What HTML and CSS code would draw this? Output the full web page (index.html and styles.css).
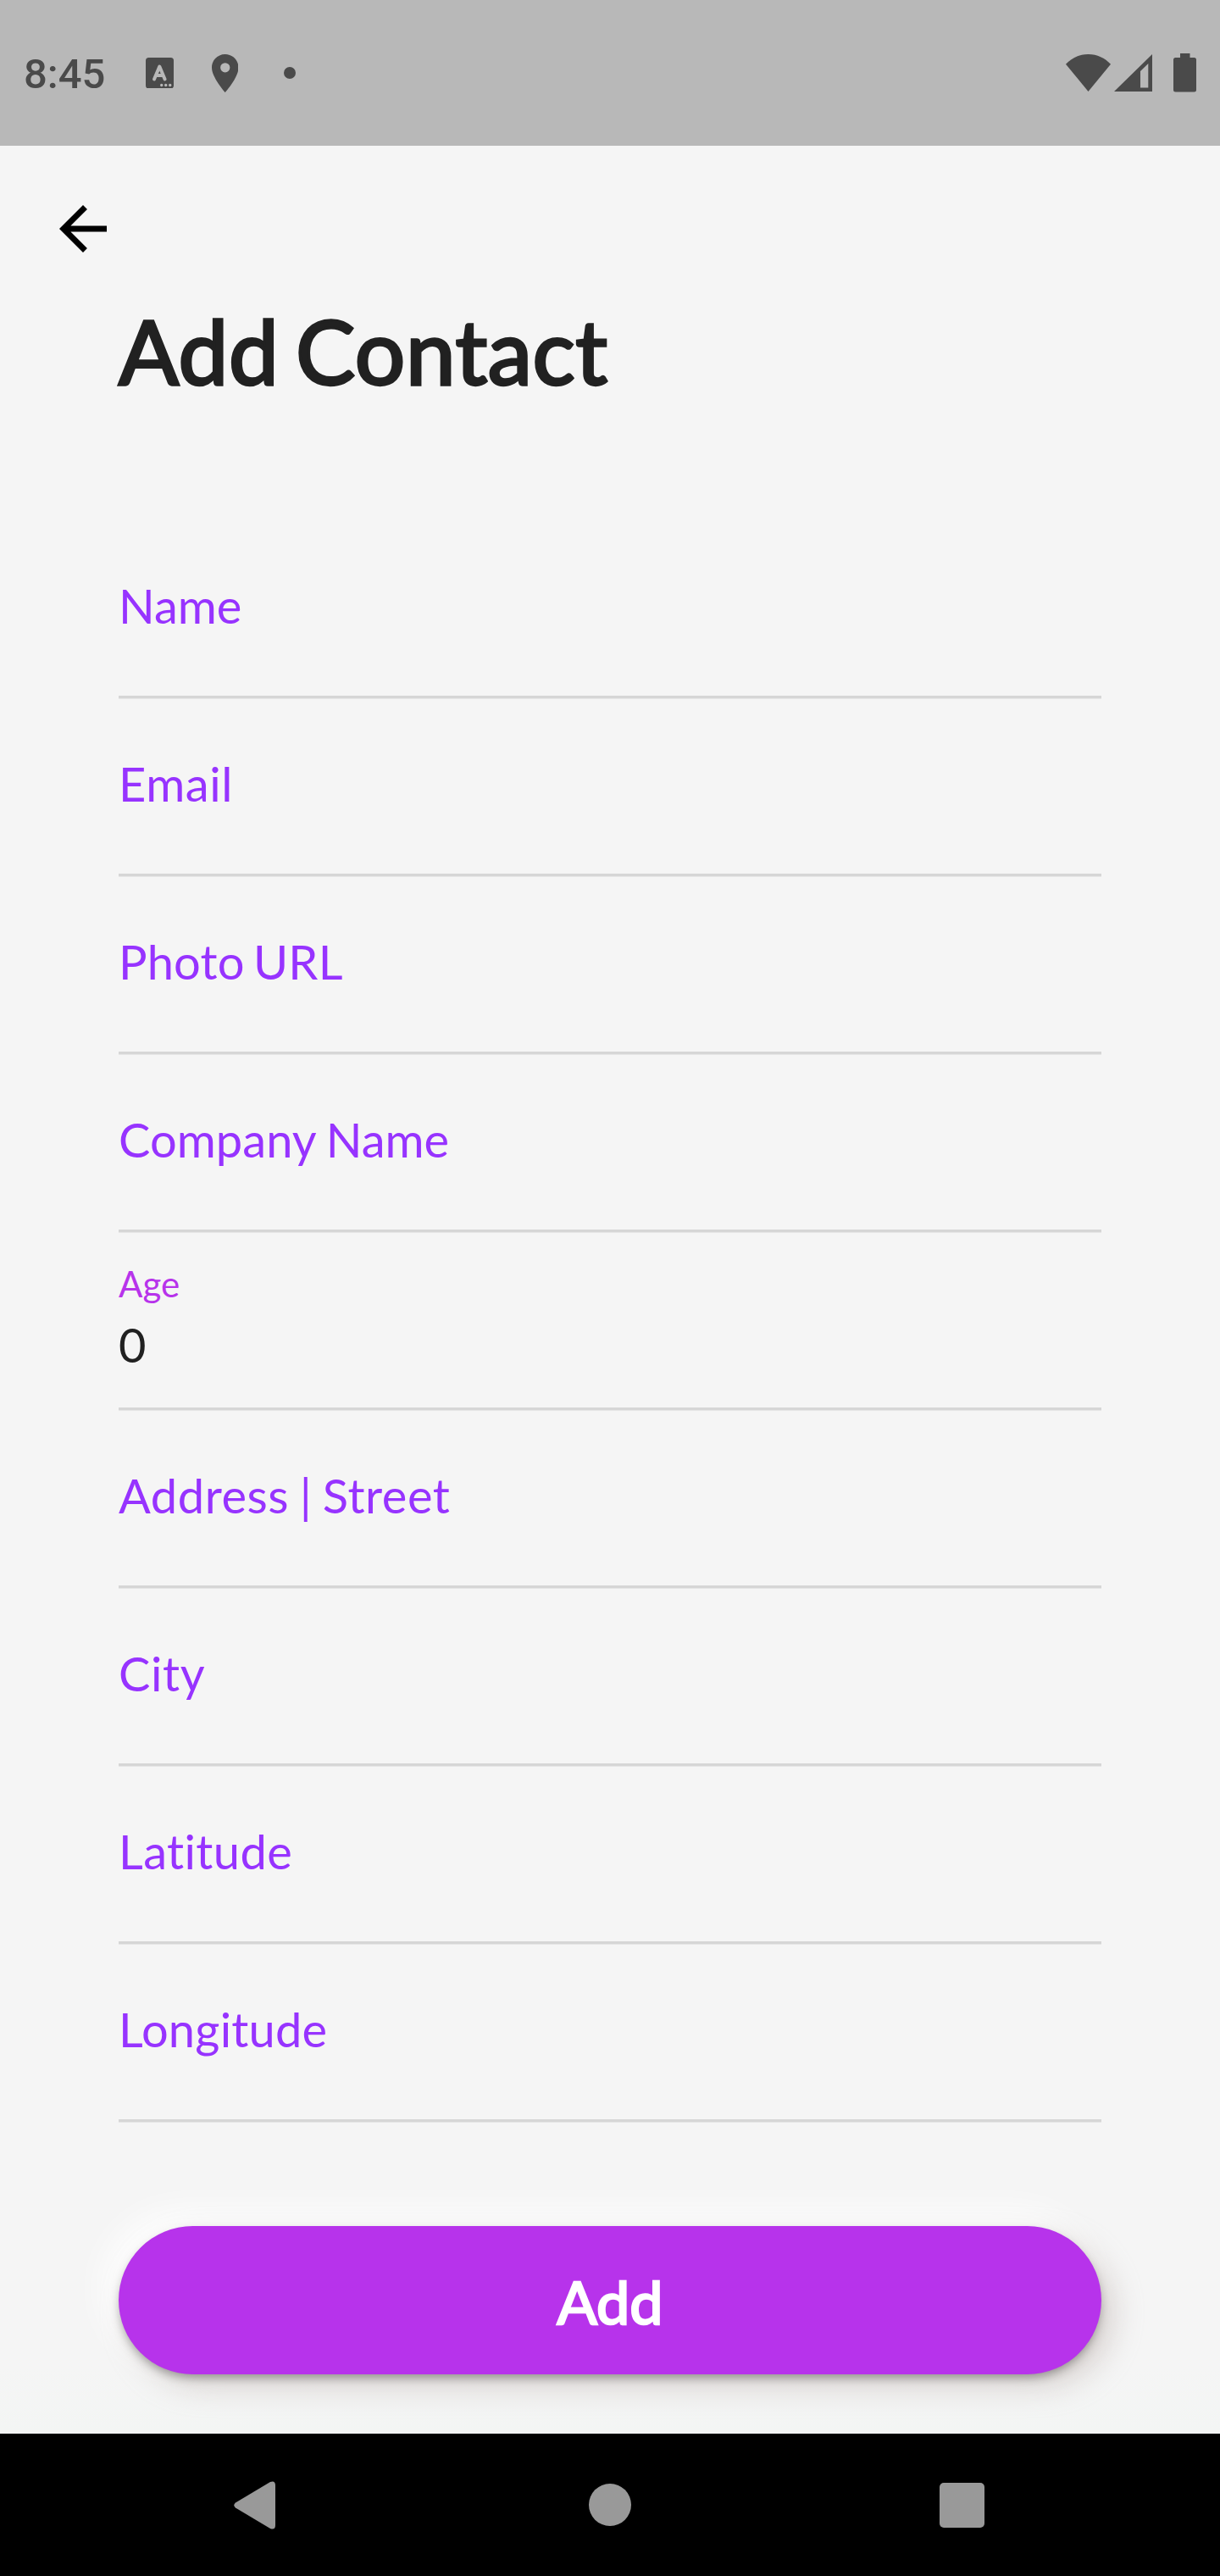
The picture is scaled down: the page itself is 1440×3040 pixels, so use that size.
FILE: index.html
```html
<!DOCTYPE html>
<html lang="en">
<head>
<meta charset="utf-8">
<title>Add Contact</title>
<link rel="stylesheet" href="styles.css">
</head>
<body>
<div class="screen">
  <header class="status-bar">
    <div class="status-left">
      <span class="clock">8:45</span>
      <svg class="icon-input" viewBox="0 0 33 36.5"><rect width="33" height="36.5" rx="3.5" fill="#4a4a4a"/><path d="M10 25.5L16.3 10.5L22.6 25.5M12.5 21H20" fill="none" stroke="#b8b8b8" stroke-width="4" stroke-linecap="round" stroke-linejoin="round"/><g fill="#b8b8b8"><circle cx="18.7" cy="32.5" r="1.7"/><circle cx="23.7" cy="32.5" r="1.7"/><circle cx="28.7" cy="32.5" r="1.7"/></g></svg>
      <svg class="icon-pin" viewBox="5 2 14 20"><path fill="#4a4a4a" d="M12 2C8.13 2 5 5.13 5 9c0 5.25 7 13 7 13s7-7.75 7-13c0-3.87-3.13-7-7-7zm0 9.5a2.5 2.5 0 0 1 0-5 2.5 2.5 0 0 1 0 5z"/></svg>
      <span class="dot"></span>
    </div>
    <div class="status-right">
      <svg class="icon-wifi" viewBox="0 0 53 44"><path fill="#4a4a4a" d="M26.5 44L0 11.700C7 4.500 16 0 26.500 0S46 4.500 53 11.700z"/></svg>
      <svg class="icon-signal" viewBox="0 0 45 44"><path fill="#4a4a4a" fill-rule="evenodd" d="M45 0V44H0zM40.300 11L31 20V39.500H40.300z"/></svg>
      <svg class="icon-battery" viewBox="0 0 27 46"><path fill="#4a4a4a" d="M8 0H19.500V5H24.500Q27 5 27 7.500V43Q27 45.500 24.500 45.500H2.500Q0 45.500 0 43V7.500Q0 5 2.500 5H8z"/></svg>
    </div>
  </header>
  <main class="page">
    <svg class="back" viewBox="0 0 24 24"><path d="M20 11H7.830l5.590-5.590L12 4l-8 8 8 8 1.410-1.410L7.830 13H20v-2z"/></svg>
    <h1 class="title">Add Contact</h1>
    <form class="form">
      <div class="field"><label class="label">Name</label></div>
      <div class="field email"><label class="label">Email</label></div>
      <div class="field photo"><label class="label">Photo URL</label></div>
      <div class="field company"><label class="label">Company Name</label></div>
      <div class="field filled"><label class="label">Age</label><span class="value">0</span></div>
      <div class="field street"><label class="label">Address | Street</label></div>
      <div class="field city"><label class="label">City</label></div>
      <div class="field latitude"><label class="label">Latitude</label></div>
      <div class="field longitude"><label class="label">Longitude</label></div>
      <button class="submit" type="button">Add</button>
    </form>
  </main>
  <nav class="nav-bar">
    <svg class="nav-back" viewBox="0 0 49 57"><path fill="#999" d="M2 25.500L43 1Q49 -1 49 5V52Q49 58 43 56L2 31.500Q-1.500 28.500 2 25.500z"/></svg>
    <span class="nav-home"></span>
    <span class="nav-recent"></span>
  </nav>
</div>
</body>
</html>
```
FILE: styles.css
```css
* { box-sizing: border-box; }
body { margin: 0; background: #f5f5f5; font-family: Lato, sans-serif; font-variant-ligatures: none; }
.screen { width: 1440px; height: 3040px; display: flex; flex-direction: column; overflow: hidden; }

.status-bar { height: 172px; background: #b8b8b8; display: flex; justify-content: space-between; align-items: center; padding: 0 28px; color: #4a4a4a; }
.status-left, .status-right { display: flex; align-items: center; }
.clock { width: 144px; font: 500 49px/58px Roboto, sans-serif; padding-top: 4px; }
.icon-input { width: 33px; height: 36.5px; }
.icon-pin { width: 31.5px; height: 45px; margin-left: 44.5px; }
.dot { width: 14px; height: 14px; border-radius: 50%; background: #4a4a4a; margin-left: 53.5px; }
.icon-wifi { width: 53px; height: 44px; }
.icon-signal { width: 45px; height: 44px; margin-left: 4px; }
.icon-battery { width: 27px; height: 46px; margin-left: 25px; }

.page { flex: 1; padding: 56px 140px 0; background: linear-gradient(#f5f5f5 97%, #f3f5f4); }
.back { display: block; width: 84px; height: 84px; margin-left: -84px; }
.title { margin: 38px 0 0; font-size: 105px; line-height: 126px; font-weight: 400; letter-spacing: .6px; word-spacing: -7.7px; color: #212121; -webkit-text-stroke: 3.3px #212121; white-space: nowrap; }
.form { margin-top: 138px; display: flex; flex-direction: column; }
.field { height: 210px; border-bottom: 3px solid #d6d6d6; box-shadow: 0 1px #e6e6e6; display: flex; flex-direction: column; padding-top: 67px; }
.label { font-size: 56px; line-height: 68px; color: #9733ff; }
.email { letter-spacing: .6px; }
.photo { letter-spacing: .2px; word-spacing: -4.2px; }
.company { letter-spacing: .05px; word-spacing: -2px; }
.street { letter-spacing: .55px; word-spacing: -2.4px; }
.city { letter-spacing: .6px; }
.latitude { letter-spacing: .4px; }
.longitude { letter-spacing: .2px; }
.filled { padding-top: 36px; }
.filled .label { font-size: 42px; line-height: 50px; color: #b733eb; }
.value { font-size: 56px; line-height: 68px; margin-top: 13px; color: #212121; }
.submit { height: 175px; margin-top: 123px; padding: 2px 0 0; border: 0; border-radius: 87.5px; background: #b733eb; color: #fff; font: 400 70px/84px Lato, sans-serif; -webkit-text-stroke: 2.6px #fff;
  box-shadow: 0 6px 12px -2px rgba(0, 0, 0, .34), 14px 14px 35px rgba(175, 160, 155, .42), -14px -14px 42px 2px #fff; }

.nav-bar { height: 168px; background: #000; display: flex; justify-content: space-between; align-items: center; padding: 0 278.5px 0 276px; }
.nav-back { width: 49px; height: 57px; }
.nav-home { width: 50px; height: 50px; margin-left: 6.5px; border-radius: 50%; background: #999; }
.nav-recent { width: 53px; height: 53px; border-radius: 5px; background: #999; }
```
